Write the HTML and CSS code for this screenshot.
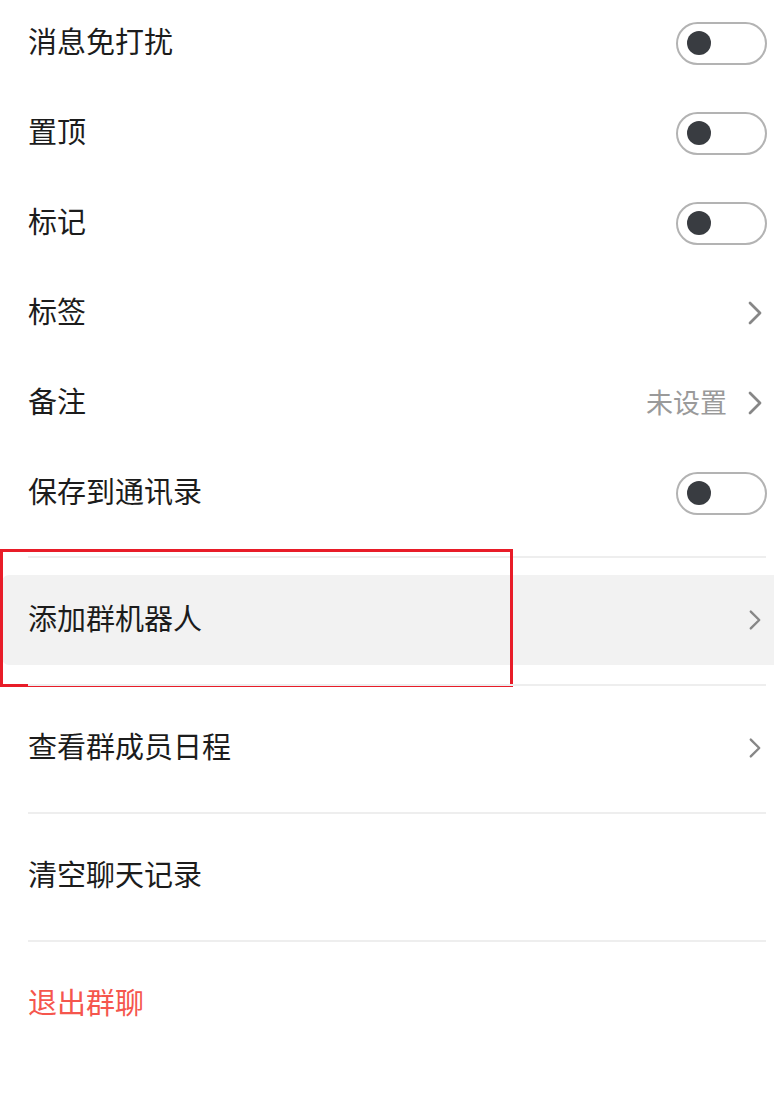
FILE: index.html
```html
<!DOCTYPE html>
<html lang="zh-CN">
<head>
<meta charset="utf-8">
<link rel="stylesheet" href="styles.css">
</head>
<body>
<div class="page">
  <div class="list">
    <div class="row"><span class="label">消息免打扰</span><span class="toggle"><span class="knob"></span></span></div>
    <div class="row"><span class="label">置顶</span><span class="toggle"><span class="knob"></span></span></div>
    <div class="row"><span class="label">标记</span><span class="toggle"><span class="knob"></span></span></div>
    <div class="row"><span class="label">标签</span><span class="right"><svg class="chev" viewBox="0 0 16 26"><polyline points="3,3 13,13 3,23"/></svg></span></div>
    <div class="row"><span class="label">备注</span><span class="right"><span class="value">未设置</span><svg class="chev" viewBox="0 0 16 26"><polyline points="3,3 13,13 3,23"/></svg></span></div>
    <div class="row"><span class="label">保存到通讯录</span><span class="toggle"><span class="knob"></span></span></div>
  </div>

  <div class="group highlight-group">
    <div class="row hover"><span class="label">添加群机器人</span><span class="right"><svg class="chev small" viewBox="0 0 16 26"><polyline points="3,3 13,13 3,23"/></svg></span></div>
    <div class="mark"></div>
  </div>

  <div class="group">
    <div class="row"><span class="label">查看群成员日程</span><span class="right"><svg class="chev small" viewBox="0 0 16 26"><polyline points="3,3 13,13 3,23"/></svg></span></div>
  </div>

  <div class="group">
    <div class="row"><span class="label">清空聊天记录</span></div>
  </div>

  <div class="group">
    <div class="row"><span class="label danger">退出群聊</span></div>
  </div>
</div>
</body>
</html>
```

FILE: styles.css
```css
html, body {
  margin: 0;
  padding: 0;
  background: #ffffff;
}

.page {
  width: 774px;
  height: 1112px;
  overflow: hidden;
  font-family: "Noto Sans CJK SC", "Noto Sans", sans-serif;
  color: #1c1c1c;
}

.list {
  margin-top: -2px;
  padding-bottom: 18px;
}

.row {
  height: 90px;
  display: flex;
  align-items: center;
  justify-content: space-between;
  padding: 0 7px 0 28px;
  box-sizing: border-box;
}

.label {
  font-size: 29px;
  line-height: 1;
  padding-bottom: 5px;
}

.danger {
  color: #f5564d;
}

.right {
  display: flex;
  align-items: center;
  gap: 20px;
}

.value {
  font-size: 27px;
  line-height: 1;
  color: #9a9a9a;
  padding-bottom: 3px;
}

.chev {
  width: 16px;
  height: 26px;
  margin-right: 4px;
}

.chev polyline {
  fill: none;
  stroke: #878787;
  stroke-width: 2.8;
  stroke-linecap: round;
  stroke-linejoin: round;
}

.chev.small {
  width: 14px;
  height: 22px;
  margin-right: 5px;
}

.toggle {
  width: 91px;
  height: 43px;
  box-sizing: border-box;
  border: 2px solid #b3b3b3;
  border-radius: 22px;
  display: flex;
  align-items: center;
  padding-left: 9px;
}

.knob {
  width: 24px;
  height: 24px;
  border-radius: 50%;
  background: #393c41;
}

.group {
  position: relative;
  margin-left: 28px;
  margin-right: 8px;
  border-top: 2px solid #eeeeee;
  padding: 17px 0 19px;
}

.group .row {
  margin-left: -28px;
  margin-right: -8px;
}

.highlight-group .row.hover {
  margin-left: -26px;
  margin-right: -8px;
  padding-left: 26px;
  padding-right: 7px;
  background: #f2f2f2;
  border-radius: 7px 0 0 7px;
}

.mark {
  position: absolute;
  left: -28px;
  top: -9px;
  width: 513px;
  height: 138px;
  box-sizing: border-box;
  border: 3px solid #e81c28;
}
```
